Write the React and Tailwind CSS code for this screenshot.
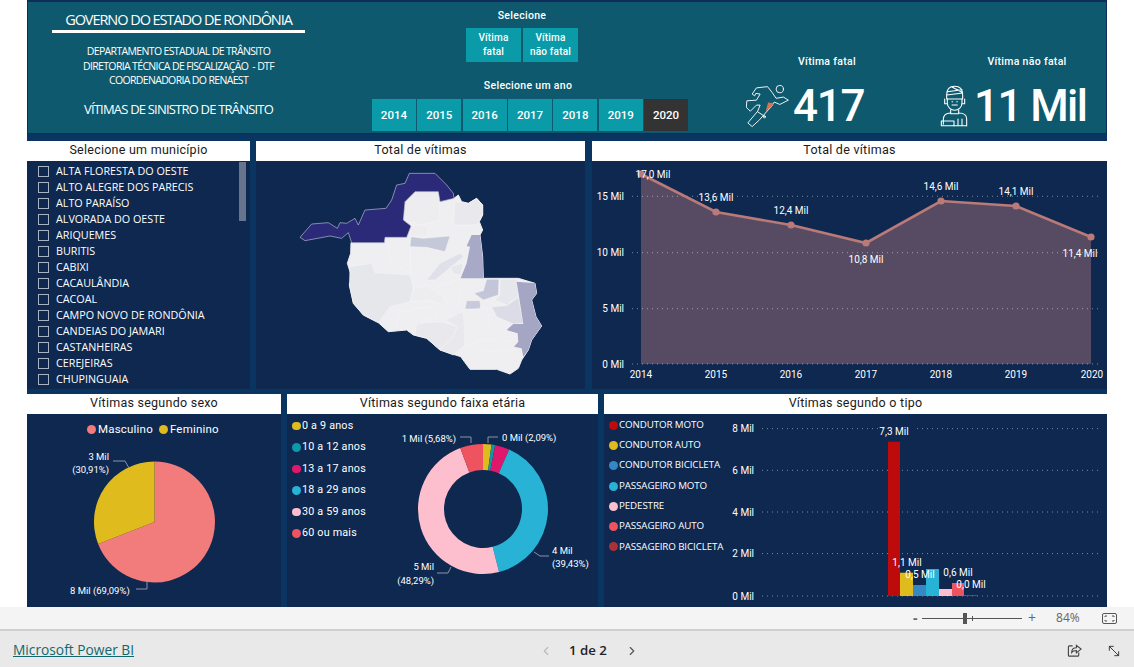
import { ChevronLeft, ChevronRight, MoveDiagonal2 } from 'lucide-react'

const DIN = "font-['Roboto',sans-serif]"
const SEGOE = "font-['Open_Sans',sans-serif]"

const YEARS = ['2014', '2015', '2016', '2017', '2018', '2019', '2020']

const CITIES = [
  'ALTA FLORESTA DO OESTE',
  'ALTO ALEGRE DOS PARECIS',
  'ALTO PARAÍSO',
  'ALVORADA DO OESTE',
  'ARIQUEMES',
  'BURITIS',
  'CABIXI',
  'CACAULÂNDIA',
  'CACOAL',
  'CAMPO NOVO DE RONDÔNIA',
  'CANDEIAS DO JAMARI',
  'CASTANHEIRAS',
  'CEREJEIRAS',
  'CHUPINGUAIA',
]

const AGES = [
  { label: '0 a 9 anos', color: 'bg-[#e0bb1e]' },
  { label: '10 a 12 anos', color: 'bg-[#0a9aa8]' },
  { label: '13 a 17 anos', color: 'bg-[#e0186c]' },
  { label: '18 a 29 anos', color: 'bg-[#27b2d6]' },
  { label: '30 a 59 anos', color: 'bg-[#fdbfcd]' },
  { label: '60 ou mais', color: 'bg-[#ee535f]' },
]

const TYPES = [
  { label: 'CONDUTOR MOTO', color: 'bg-[#bd0a0a]' },
  { label: 'CONDUTOR AUTO', color: 'bg-[#e0bb1e]' },
  { label: 'CONDUTOR BICICLETA', color: 'bg-[#3488c4]' },
  { label: 'PASSAGEIRO MOTO', color: 'bg-[#27b2d6]' },
  { label: 'PEDESTRE', color: 'bg-[#fdbfcd]' },
  { label: 'PASSAGEIRO AUTO', color: 'bg-[#ee535f]' },
  { label: 'PASSAGEIRO BICICLETA', color: 'bg-[#a83238]' },
]

// page coordinates, the svg viewBoxes below are offset to match
const LINE_POINTS = [
  { x: 641, y: 174, label: '17,0 Mil', lx: 653, ly: 178 },
  { x: 716, y: 212, label: '13,6 Mil', lx: 716, ly: 201 },
  { x: 791, y: 225, label: '12,4 Mil', lx: 791, ly: 214 },
  { x: 866, y: 243, label: '10,8 Mil', lx: 866, ly: 263 },
  { x: 941, y: 201, label: '14,6 Mil', lx: 941, ly: 190 },
  { x: 1016, y: 206, label: '14,1 Mil', lx: 1016, ly: 195 },
  { x: 1091, y: 237, label: '11,4 Mil', lx: 1080, ly: 257 },
]

const BARS = [
  { x: 888, w: 12, top: 441.7, fill: '#bd0a0a' },
  { x: 900, w: 13, top: 572.7, fill: '#e0bb1e' },
  { x: 913, w: 13, top: 585, fill: '#3488c4' },
  { x: 926, w: 13, top: 569, fill: '#27b2d6' },
  { x: 939, w: 13, top: 589, fill: '#fdbfcd' },
  { x: 952, w: 12, top: 583, fill: '#ee535f' },
  { x: 964, w: 13, top: 595, fill: '#a83238' },
]

const DONUT = [
  { pct: 2.09, fill: '#e0bb1e' },
  { pct: 0.9, fill: '#0a9aa8' },
  { pct: 3.61, fill: '#e0186c' },
  { pct: 39.43, fill: '#27b2d6' },
  { pct: 48.29, fill: '#fdbfcd' },
  { pct: 5.68, fill: '#ee535f' },
]

function polar(cx, cy, r, pct) {
  const a = (pct / 100) * Math.PI * 2
  return [cx + r * Math.sin(a), cy - r * Math.cos(a)]
}

function ringSlice(cx, cy, r, inner, from, to) {
  const [x1, y1] = polar(cx, cy, r, from)
  const [x2, y2] = polar(cx, cy, r, to)
  const [x3, y3] = polar(cx, cy, inner, to)
  const [x4, y4] = polar(cx, cy, inner, from)
  const big = to - from > 50 ? 1 : 0
  return `M${x1} ${y1}A${r} ${r} 0 ${big} 1 ${x2} ${y2}L${x3} ${y3}A${inner} ${inner} 0 ${big} 0 ${x4} ${y4}Z`
}

function pieSlice(cx, cy, r, from, to) {
  const [x1, y1] = polar(cx, cy, r, from)
  const [x2, y2] = polar(cx, cy, r, to)
  const big = to - from > 50 ? 1 : 0
  return `M${cx} ${cy}L${x1} ${y1}A${r} ${r} 0 ${big} 1 ${x2} ${y2}Z`
}

function Title({ children }) {
  return (
    <div className={`h-[21px] shrink-0 bg-white text-center text-[12.5px] leading-[18px] tracking-[0.25px] text-[#1a1a1a] border-b border-[#0b2a52] ${DIN}`}>
      {children}
    </div>
  )
}

function RunnerIcon() {
  return (
    <svg viewBox="2 18 140 142" className="w-[43px] h-[44px] shrink-0" fill="none" stroke="white" strokeWidth="3" strokeLinejoin="round" strokeLinecap="round">
      <circle cx="112" cy="34" r="12" />
      <path d="M6 72 L36 70 L48 50 L34 48 L30 56 L22 50 L36 30 L72 26 L88 46 L100 64 L124 60 L140 70 L112 84 L94 76 L84 92 L74 102 L46 134 L22 156 L8 144 L40 106 L48 86 L36 86 L16 106 L4 94 Z" />
      <path d="M40 108 L62 122" />
      <path d="M66 106 L84 92 L92 80 L74 78 Z" fill="#dc6f52" stroke="none" />
      <circle cx="62" cy="124" r="3.5" />
    </svg>
  )
}

function PatientIcon() {
  return (
    <svg viewBox="0 0 84 126" className="w-[28px] h-[44px] shrink-0" fill="none" stroke="white" strokeWidth="3.2" strokeLinejoin="round" strokeLinecap="round">
      <path d="M20 30 C20 10 32 4 44 4 C58 4 68 12 68 30 L68 42 L20 42 Z" />
      <path d="M22 20 L66 14 M20 30 L68 24 M36 6 L66 22" />
      <path d="M22 42 L22 54 C22 68 34 76 44 76 C54 76 66 68 66 54 L66 42" />
      <path d="M14 42 L14 56 L22 56 M74 42 L74 56 L66 56" />
      <path d="M36 60 L52 60 M36 50 L38 50 M50 50 L52 50" />
      <path d="M32 74 L32 86 L56 86 L56 74" />
      <path d="M32 84 C14 84 10 94 10 104 L10 118 M56 84 C72 84 80 92 80 102 L80 122" />
      <path d="M4 122 L4 108 L42 108 L42 122 Z" />
      <path d="M42 122 L80 122 M54 102 L54 122 M66 102 L66 122" />
    </svg>
  )
}

function Banner() {
  return (
    <div className="h-[134px] shrink-0 flex bg-[#0e596d] border-t-2 border-x border-b border-[#0f2c5c] text-white">
      <div className={`w-[301px] shrink-0 flex flex-col items-center ${SEGOE}`}>
        <div className="mt-[9px] h-[18px] text-[14.5px] leading-[18px] tracking-[-1.05px] whitespace-nowrap">GOVERNO DO ESTADO DE RONDÔNIA</div>
        <div className="w-[253px] h-[3px] mt-[1px] bg-white" />
        <div className="mt-[11px] text-[10.5px] leading-[14.5px] tracking-[-0.65px] text-center whitespace-nowrap font-medium">
          <div>DEPARTAMENTO ESTADUAL DE TRÂNSITO</div>
          <div>DIRETORIA TÉCNICA DE FISCALIZAÇÃO&nbsp; - DTF</div>
          <div>COORDENADORIA DO RENAEST</div>
        </div>
        <div className="mt-[12px] text-[13px] leading-[18px] tracking-[-0.8px] whitespace-nowrap">VÍTIMAS DE SINISTRO DE TRÂNSITO</div>
      </div>

      <div className={`ml-[43px] w-[316px] shrink-0 flex flex-col ${DIN}`}>
        <div className="ml-[94px] w-[112px] mt-[7px] text-center text-[10.5px] leading-[14px] font-medium tracking-[0.3px]">Selecione</div>
        <div className="ml-[94px] mt-[5px] flex gap-[2px] text-[10px] leading-[13.5px] font-medium text-center tracking-[0.2px]">
          <div className="w-[55px] h-[34px] pt-[3px] bg-[#0a9aa8]">Vítima<br />fatal</div>
          <div className="w-[55px] h-[34px] pt-[3px] bg-[#0a9aa8]">Vítima<br />não fatal</div>
        </div>
        <div className="mt-[17px] text-center text-[10.5px] leading-[14px] font-medium tracking-[0.3px] pr-[4px]">Selecione um ano</div>
        <div className="mt-[6px] flex gap-[1.5px]">
          {YEARS.map(year => (
            <div
              key={year}
              className={`flex-1 h-[32px] pt-[2px] flex items-center justify-center text-[11.5px] font-medium ${year === '2020' ? 'bg-[#333333]' : 'bg-[#0a9aa8]'}`}
            >
              {year}
            </div>
          ))}
        </div>
      </div>

      <div className={`ml-[58px] w-[162px] shrink-0 flex flex-col ${DIN}`}>
        <div className="mt-[53px] text-center text-[10.5px] leading-[14px] font-medium tracking-[0.3px]">Vítima fatal</div>
        <div className="mt-[15px] flex items-center gap-[4px]">
          <RunnerIcon />
          <span className="text-[44px] leading-[44px] font-medium tracking-[-1.2px]">417</span>
        </div>
      </div>

      <div className={`ml-[32px] flex-1 flex flex-col ${DIN}`}>
        <div className="mt-[53px] pl-[8px] text-center text-[10.5px] leading-[14px] font-medium tracking-[0.3px]">Vítima não fatal</div>
        <div className="mt-[15px] flex items-center gap-[6px]">
          <PatientIcon />
          <span className="text-[44px] leading-[44px] font-medium tracking-[-1.6px] whitespace-nowrap">11 Mil</span>
        </div>
      </div>
    </div>
  )
}

function MunicipioPanel() {
  return (
    <div className="w-[223px] shrink-0 flex flex-col">
      <Title>Selecione um município</Title>
      <div className="flex-1 flex bg-[#0e2850] pt-[1px] pl-[11px]">
        <ul className={`flex-1 text-white text-[10.75px] leading-[16px] ${SEGOE}`}>
          {CITIES.map(city => (
            <li key={city} className="flex items-center h-[16px] whitespace-nowrap">
              <span className="w-[11px] h-[11px] mr-[7px] border border-[#a9b2c0] shrink-0" />
              {city}
            </li>
          ))}
        </ul>
        <div className="w-[7px] mr-[4px] -mt-[1px] self-start h-[59px] bg-[#66758d]" />
      </div>
    </div>
  )
}

function MapPanel() {
  return (
    <div className="w-[329px] shrink-0 flex flex-col">
      <Title>Total de vítimas</Title>
      <div className="flex-1 bg-[#0e2850]">
        <svg viewBox="18 6 987 681" className="w-[329px] h-[227px] block">
          <path fill="#efeff1" stroke="#eeeef2" strokeWidth="3" d="M303 248L403 248L405 232L470 232L483 198L460 180L465 125L495 95L565 95L570 125L612 115L625 105L635 125L655 130L680 115L698 135L698 165L688 185L698 210L690 225L698 290L700 355L805 355L855 370L860 400L845 420L858 470L875 498L845 540L835 570L815 600L805 625L780 642L740 628L660 628L632 590L570 570L530 535L490 525L470 510L415 515L385 488L340 465L310 430L298 375L305 350L292 310L302 280Z" />
          <g stroke="#f5f5f7" strokeWidth="1.5">
            <path fill="#e6e7eb" d="M300 320L365 310L375 338L480 345L490 385L480 425L420 440L385 488L340 465L310 430L298 375Z" />
            <path fill="#ededf0" d="M465 125L495 95L565 95L570 180L515 195L460 180Z" />
            <path fill="#e9e9ed" d="M615 125L655 130L680 115L698 135L698 165L680 195L610 195Z" />
            <path fill="#ededf0" d="M480 198L530 195L535 228L483 230Z" />
            <path fill="#e9e9ed" d="M495 525L500 490L575 485L622 500L610 530L570 570L530 535Z" />
            <path fill="#e8e8ed" d="M585 480L640 455L645 555L610 585L570 570L610 530L622 500Z" />
            <path fill="#ededf0" d="M490 385L530 378L580 410L590 440L540 420L480 425Z" />
            <path fill="#e6e7ec" d="M750 358L800 358L805 410L770 435L735 420L750 405Z" />
            <path fill="#dbdce5" d="M725 440L770 437L805 412L820 490L790 492L740 470Z" />
            <path fill="#dfe0e9" d="M530 360L570 310L630 280L640 290L580 340L555 360Z" />
            <path fill="#e6e7ed" d="M600 320L640 310L632 345L610 340Z" />
            <path fill="#c5c8d8" d="M483 230L520 235L600 228L585 275L530 262L480 260Z" />
            <path fill="#c3c5d9" d="M710 358L747 358L745 405L700 420L672 400L700 392Z" />
            <path fill="#c8cadb" d="M650 422L690 422L692 447L645 447Z" />
            <path fill="none" d="M440 500L445 460L500 445L545 440L560 465L505 495M640 560L700 540L790 545M700 575L800 570M665 450L710 440L720 500M480 260L480 340M415 250L420 300L480 340M560 380L640 355M630 380L625 440" />
          </g>
          <path fill="#a7a9c6" d="M665 225L690 225L698 290L700 355L632 355L650 310L660 260L650 258Z" />
          <path fill="#a4a6c4" d="M800 365L855 370L860 400L845 420L858 470L875 498L845 540L835 570L820 590L815 565L792 560L805 545L803 520L770 510L790 492L820 492Z" />
          <path fill="#2b2a78" stroke="#b9bdd0" strokeWidth="2" strokeLinejoin="round" d="M150 232L185 192L235 188L262 205L270 188L290 190L315 175L325 195L345 150L408 145L425 120L440 75L465 70L478 40L555 40L590 75L610 100L612 115L570 125L565 95L495 95L465 125L460 180L483 198L470 232L405 232L403 248L305 248L295 218L275 235L240 228L165 242Z" />
        </svg>
      </div>
    </div>
  )
}

function LinePanel() {
  const linePts = LINE_POINTS.map(p => `${p.x},${p.y}`).join(' ')
  return (
    <div className="flex-1 ml-[1px] flex flex-col">
      <Title>Total de vítimas</Title>
      <div className="flex-1 bg-[#0e2850]">
        <svg viewBox="592 162 515 227" className={`w-[515px] h-[227px] block text-[10px] ${DIN}`}>
          <polygon points={`641,364 ${linePts} 1091,364`} fill="#564b62" />
          {[196.3, 252.7, 308.7, 364].map(y => (
            <line key={y} x1="632" x2="1100" y1={y} y2={y} stroke="#ffffff" strokeOpacity="0.45" strokeWidth="1" strokeDasharray="1 4" />
          ))}
          <polyline points={linePts} fill="none" stroke="#b97a78" strokeWidth="2.6" />
          {LINE_POINTS.map(p => (
            <circle key={p.x} cx={p.x} cy={p.y} r="3.6" fill="#b97a78" />
          ))}
          {[['15 Mil', 196.3], ['10 Mil', 252.7], ['5 Mil', 308.7], ['0 Mil', 364]].map(([t, y]) => (
            <text key={t} x="624" y={y + 3.5} textAnchor="end" fill="white">{t}</text>
          ))}
          {YEARS.map((year, i) => (
            <text key={year} x={i === 6 ? 1092 : 641 + i * 75} y="378" textAnchor="middle" fill="white">{year}</text>
          ))}
          {LINE_POINTS.map(p => (
            <text key={p.label} x={p.lx} y={p.ly} textAnchor="middle" fill="white">{p.label}</text>
          ))}
        </svg>
      </div>
    </div>
  )
}

function SexoPanel() {
  return (
    <div className="w-[254px] shrink-0 flex flex-col">
      <Title>Vítimas segundo sexo</Title>
      <div className="flex-1 bg-[#0e2850] relative">
        <svg viewBox="27 415 254 192" className={`w-[254px] h-[192px] block text-[9.5px] ${DIN}`}>
          <path d={pieSlice(154.5, 522, 60.5, 0, 69.09)} fill="#f27b7b" />
          <path d={pieSlice(154.5, 522, 60.5, 69.09, 100)} fill="#e0bb1e" />
          <path d="M113 461L125 461L129 468" fill="none" stroke="#8a93a6" />
          <path d="M136 589L147 589L147 582" fill="none" stroke="#8a93a6" />
          <text x="109" y="460" textAnchor="end" fill="white">3 Mil</text>
          <text x="109" y="473" textAnchor="end" fill="white">(30,91%)</text>
          <text x="70" y="594" fill="white">8 Mil (69,09%)</text>
        </svg>
        <div className={`absolute top-[6px] left-[60px] flex items-center text-[11.5px] leading-[16px] text-white tracking-[0.2px] ${DIN}`}>
          <span className="w-[9px] h-[9px] rounded-full bg-[#f27b7b] mr-[2px]" />
          Masculino
          <span className="w-[9px] h-[9px] rounded-full bg-[#e0bb1e] ml-[6px] mr-[2px]" />
          Feminino
        </div>
      </div>
    </div>
  )
}

function FaixaPanel() {
  let acc = 0
  const slices = DONUT.map(d => {
    const s = { fill: d.fill, from: acc, to: acc + d.pct }
    acc += d.pct
    return s
  })
  return (
    <div className="w-[311px] shrink-0 flex flex-col">
      <Title>Vítimas segundo faixa etária</Title>
      <div className="flex-1 bg-[#0e2850] relative">
        <svg viewBox="287 415 311 192" className={`w-[311px] h-[192px] block text-[9.5px] ${DIN}`}>
          {slices.map(s => (
            <path key={s.fill} d={ringSlice(483, 509, 65, 39, s.from, s.to)} fill={s.fill} />
          ))}
          <path d="M460 437L471 437L471 443" fill="none" stroke="#8a93a6" />
          <path d="M488 443L488 437L498 437" fill="none" stroke="#8a93a6" />
          <path d="M534 552L540 556L549 556" fill="none" stroke="#8a93a6" />
          <path d="M437 573L448 573L451 567" fill="none" stroke="#8a93a6" />
          <text x="456" y="442" textAnchor="end" fill="white">1 Mil (5,68%)</text>
          <text x="502" y="441" fill="white">0 Mil (2,09%)</text>
          <text x="552" y="554" fill="white">4 Mil</text>
          <text x="552" y="567" fill="white">(39,43%)</text>
          <text x="434" y="570" textAnchor="end" fill="white">5 Mil</text>
          <text x="434" y="584" textAnchor="end" fill="white">(48,29%)</text>
        </svg>
        <ul className={`absolute top-[0px] left-[5px] text-white text-[10.75px] tracking-[0.2px] ${DIN}`}>
          {AGES.map(age => (
            <li key={age.label} className="h-[21.5px] flex items-center gap-[1.5px]">
              <span className={`w-[8.5px] h-[8.5px] rounded-full ${age.color}`} />
              {age.label}
            </li>
          ))}
        </ul>
      </div>
    </div>
  )
}

function TipoPanel() {
  const grid = [[428.6, '8 Mil'], [470.3, '6 Mil'], [512, '4 Mil'], [553.6, '2 Mil'], [596, '0 Mil']]
  return (
    <div className="flex-1 flex flex-col">
      <Title>Vítimas segundo o tipo</Title>
      <div className="flex-1 bg-[#0e2850] relative">
        <svg viewBox="604 415 503 192" className={`w-[503px] h-[192px] block text-[10px] ${DIN}`}>
          {grid.map(([y, t]) => (
            <g key={t}>
              <line x1="762" x2="1102" y1={y} y2={y} stroke="#ffffff" strokeOpacity="0.45" strokeDasharray="1 4" />
              <text x="754" y={y + 3.5} textAnchor="end" fill="white">{t}</text>
            </g>
          ))}
          <rect x="885" y="426" width="28" height="6" fill="#0e2850" />
          {BARS.map(b => (
            <rect key={b.x} x={b.x} y={b.top} width={b.w} height={596 - b.top} fill={b.fill} />
          ))}
          <text x="894" y="435" textAnchor="middle" fill="white">7,3 Mil</text>
          <text x="907" y="566" textAnchor="middle" fill="white">1,1 Mil</text>
          <text x="920" y="578" textAnchor="middle" fill="white">0,5 Mil</text>
          <text x="958" y="576" textAnchor="middle" fill="white">0,6 Mil</text>
          <text x="971" y="588" textAnchor="middle" fill="white">0,0 Mil</text>
        </svg>
        <ul className={`absolute top-[0px] left-[5px] text-white text-[9.75px] tracking-[-0.1px] ${SEGOE}`}>
          {TYPES.map(t => (
            <li key={t.label} className="h-[20.3px] flex items-center gap-[1px] whitespace-nowrap">
              <span className={`w-[9px] h-[9px] rounded-full ${t.color}`} />
              {t.label}
            </li>
          ))}
        </ul>
      </div>
    </div>
  )
}

function ZoomBar() {
  return (
    <div className={`h-[24px] shrink-0 bg-[#f4f4f4] border-b-2 border-[#cfcfcf] flex items-center text-[#666] ${SEGOE}`}>
      <span className="ml-[913px] w-[6px] text-[14px] leading-none font-bold">-</span>
      <div className="ml-[3px] w-[100px] h-[1px] bg-[#555] relative">
        <span className="absolute left-[41px] -top-[5px] w-[4px] h-[11px] bg-[#555]" />
        <span className="absolute left-[50px] -top-[2px] w-[1px] h-[5px] bg-[#555]" />
      </div>
      <span className="ml-[6px] text-[14px] leading-none">+</span>
      <span className="ml-[20px] text-[12px]">84%</span>
      <svg viewBox="0 0 15 11" className="ml-[22px] w-[15px] h-[11px]" fill="none" stroke="#555" strokeWidth="1">
        <rect x="0.5" y="0.5" width="14" height="10" rx="1.5" />
        <path d="M3 4V3H5M10 3H12V4M12 7V8H10M5 8H3V7" />
      </svg>
    </div>
  )
}

function Footer() {
  return (
    <div className={`flex-1 pt-[3px] bg-[#e9e9e9] flex items-center text-[#222] ${SEGOE}`}>
      <a className="ml-[13px] w-[128px] text-[13.75px] text-[#11686b] underline whitespace-nowrap">Microsoft Power BI</a>
      <ChevronLeft className="ml-[398px] w-[14px] h-[14px] text-[#bbb]" />
      <span className="ml-[16px] w-[40px] text-[13.25px] font-semibold whitespace-nowrap">1 de 2</span>
      <ChevronRight className="ml-[16px] w-[14px] h-[14px] text-[#555]" />
      <svg viewBox="0 0 16 16" className="ml-[428px] w-[15px] h-[15px]" fill="none" stroke="#444" strokeWidth="1.2">
        <path d="M6 3H2.5C2 3 1.5 3.5 1.5 4V13C1.5 13.5 2 14 2.5 14H11.5C12 14 12.5 13.5 12.5 13V10" />
        <path d="M5 10C5 7 7 5 10 5V2.5L15 6.5L10 10.5V8C8 8 6 8.5 5 10Z" />
      </svg>
      <MoveDiagonal2 className="ml-[24px] w-[16px] h-[16px] text-[#333]" strokeWidth={1.4} />
    </div>
  )
}

export default function App() {
  return (
    <div className="w-[1134px] h-[667px] overflow-hidden bg-white flex flex-col">
      <div className="h-[607px] shrink-0 mx-[27px] bg-[#0a3560] flex flex-col">
        <Banner />
        <div className="h-[248px] mt-[7px] shrink-0 flex gap-[6px]">
          <MunicipioPanel />
          <MapPanel />
          <LinePanel />
        </div>
        <div className="flex-1 mt-[5px] flex gap-[6px]">
          <SexoPanel />
          <FaixaPanel />
          <TipoPanel />
        </div>
      </div>
      <ZoomBar />
      <Footer />
    </div>
  )
}
